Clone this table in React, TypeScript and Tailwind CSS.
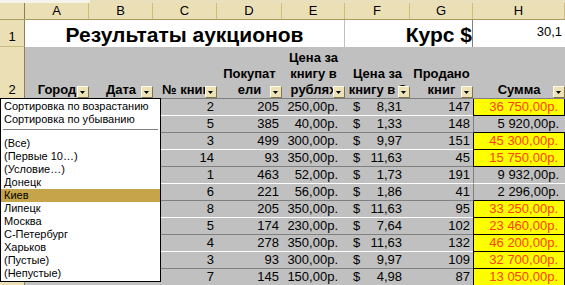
import React from "react";

const rows = [
  { c: 2, d: 205, e: "250,00р.", f: "8,31", g: 147, h: "36 750,00р.", y: true },
  { c: 5, d: 385, e: "40,00р.", f: "1,33", g: 148, h: "5 920,00р.", y: false },
  { c: 3, d: 499, e: "300,00р.", f: "9,97", g: 151, h: "45 300,00р.", y: true },
  { c: 14, d: 93, e: "350,00р.", f: "11,63", g: 45, h: "15 750,00р.", y: true },
  { c: 1, d: 463, e: "52,00р.", f: "1,73", g: 191, h: "9 932,00р.", y: false },
  { c: 6, d: 221, e: "56,00р.", f: "1,86", g: 41, h: "2 296,00р.", y: false },
  { c: 8, d: 205, e: "350,00р.", f: "11,63", g: 95, h: "33 250,00р.", y: true },
  { c: 5, d: 174, e: "230,00р.", f: "7,64", g: 102, h: "23 460,00р.", y: true },
  { c: 4, d: 278, e: "350,00р.", f: "11,63", g: 132, h: "46 200,00р.", y: true },
  { c: 3, d: 93, e: "300,00р.", f: "9,97", g: 109, h: "32 700,00р.", y: true },
  { c: 7, d: 145, e: "150,00р.", f: "4,98", g: 87, h: "13 050,00р.", y: true },
];

const cols = [
  { l: "A", w: "w-[64px]" },
  { l: "B", w: "w-[64px]" },
  { l: "C", w: "w-[64px]" },
  { l: "D", w: "w-[65px]" },
  { l: "E", w: "w-[63px]" },
  { l: "F", w: "w-[65px]" },
  { l: "G", w: "w-[63px]" },
  { l: "H", w: "w-[92px]" },
];

const heads = [
  ["Город"],
  ["Дата"],
  ["№ книг"],
  ["Покупат", "ели"],
  ["Цена за", "книгу в", "рублях"],
  ["Цена за", "книгу в $"],
  ["Продано", "книг"],
  ["Сумма"],
];

const filterItems = [
  "(Все)",
  "(Первые 10…)",
  "(Условие…)",
  "Донецк",
  "Киев",
  "Липецк",
  "Москва",
  "С-Петербург",
  "Харьков",
  "(Пустые)",
  "(Непустые)",
];

const FilterButton = () => (
  <div className="absolute right-0 bottom-0 w-[12px] h-[12px] bg-[#ece2b6] border border-t-[#fffbe8] border-l-[#fffbe8] border-b-[#7f7350] border-r-[#7f7350]">
    <svg width="10" height="10" viewBox="0 0 10 10" className="block">
      <polygon points="2,4 7,4 4.5,7" fill="#000" />
    </svg>
  </div>
);

export default function App() {
  return (
    <div className="relative w-[565px] h-[285px] overflow-hidden bg-[#c0c0c0] font-['Liberation_Sans',Arial,sans-serif] text-black">
      {/* toolbar remnant */}
      <div className="flex h-[3px]">
        <div className="w-[90px] bg-[#f6f3ea]" />
        <div className="flex-1 bg-[#e9e0bb]" />
      </div>

      {/* column letters */}
      <div className="flex h-[17px] bg-[#ebe0b5] border-b border-[#a99a68]">
        <div className="w-[25px] shrink-0 border-r border-[#8c7f58]" />
        {cols.map((c) => (
          <div
            key={c.l}
            className={`${c.w} shrink-0 border-r border-[#cdbb82] text-center text-[13px] leading-[16px]`}
          >
            {c.l}
          </div>
        ))}
      </div>

      {/* row 1 */}
      <div className="flex h-[27px] bg-white">
        <div className="w-[25px] shrink-0 bg-[#ebe0b5] border-r border-[#8c7f58] border-b border-b-[#cdbb82] flex items-end justify-center pb-[3px] text-[13px] leading-[13px]">
          1
        </div>
        <div className="w-[320px] shrink-0 border-r border-[#c0c0c0] flex items-end justify-center pb-[2px] text-[21px] leading-[20px] font-bold whitespace-nowrap">
          Результаты аукционов
        </div>
        <div className="w-[128px] shrink-0 border-r border-[#808080] flex items-end justify-end pb-[2px] text-[21px] leading-[20px] font-bold whitespace-nowrap">
          Курс $
        </div>
        <div className="w-[92px] shrink-0 flex items-center justify-end pr-[3px] pb-[3px] text-[13px] leading-[16px]">
          30,1
        </div>
      </div>

      {/* row 2: headers */}
      <div className="flex h-[52px] border-b border-[#808080]">
        <div className="w-[25px] shrink-0 bg-[#ebe0b5] border-r border-[#8c7f58] flex items-end justify-center pb-[1px] text-[13px] leading-[15px]">
          2
        </div>
        {heads.map((lines, i) => (
          <div
            key={i}
            className={`${cols[i].w} shrink-0 relative flex flex-col justify-end items-center text-[13px] leading-[16px] font-bold whitespace-nowrap overflow-hidden`}
          >
            {lines.map((t) => (
              <div key={t}>{t}</div>
            ))}
            <FilterButton />
          </div>
        ))}
      </div>

      {/* data */}
      {rows.map((r, i) => {
        const line = i % 2 === 0 ? "border-b-white" : "border-b-[#808080]";
        const next = rows[i + 1];
        const hBottom = r.y || (next && next.y) ? "border-b-black" : line;
        return (
          <div key={i} className="flex h-[17px] text-[13px] leading-[16px]">
            {/* row numbers sit under the dropdown */}
            <div className="w-[25px] shrink-0 bg-[#ebe0b5] border-r border-[#8c7f58] border-b border-b-[#cdbb82]" />
            <div className={`w-[64px] shrink-0 border-b ${line}`} />
            <div className={`w-[64px] shrink-0 border-b ${line}`} />
            <div className={`w-[64px] shrink-0 border-b ${line} text-right pr-[3px]`}>{r.c}</div>
            <div className={`w-[65px] shrink-0 border-b ${line} text-right pr-[3px]`}>{r.d}</div>
            <div className={`w-[63px] shrink-0 border-b ${line} text-right pr-[7px] whitespace-nowrap`}>{r.e}</div>
            <div className={`w-[65px] shrink-0 border-b ${line} flex justify-between pl-[8px] pr-[8px]`}>
              <span>$</span>
              <span>{r.f}</span>
            </div>
            <div className={`w-[63px] shrink-0 border-b ${line} text-right pr-[3px]`}>{r.g}</div>
            <div
              className={`w-[92px] shrink-0 border-b ${hBottom} border-l text-right pr-[6px] whitespace-nowrap ${
                r.y
                  ? "bg-[#ffff00] border-l-black border-r border-r-black text-[#ff4000]"
                  : "border-l-[#808080]"
              }`}
            >
              {r.h}
            </div>
          </div>
        );
      })}

      {/* autofilter dropdown */}
      <div className="absolute left-0 top-[98px] w-[161px] h-[184px] bg-white border border-black text-[11px] leading-[13px] pt-px">
        <div className="pl-[3px] whitespace-nowrap">Сортировка по возрастанию</div>
        <div className="pl-[3px] whitespace-nowrap">Сортировка по убыванию</div>
        <div className="h-[11px] pt-[3px] px-[2px]">
          <div className="h-px bg-[#808080]" />
        </div>
        {filterItems.map((t) => (
          <div
            key={t}
            className={`pl-[3px] h-[13px] whitespace-nowrap ${t === "Киев" ? "bg-[#c6a449]" : ""}`}
          >
            {t}
          </div>
        ))}
      </div>
    </div>
  );
}
